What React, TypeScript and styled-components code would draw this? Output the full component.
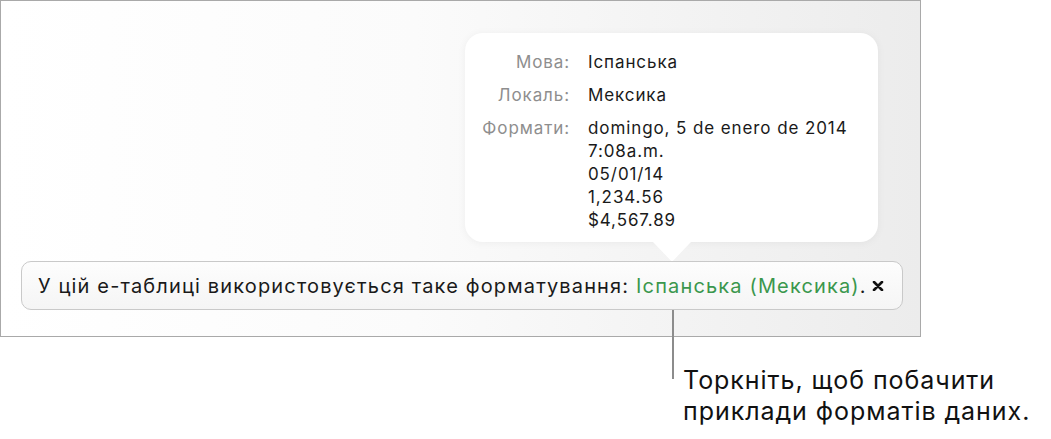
import React from "react";
import styled, { createGlobalStyle } from "styled-components";

const Global = createGlobalStyle`
  html, body { margin: 0; padding: 0; background: #ffffff; }
  body { font-family: Inter, "Liberation Sans", Arial, sans-serif; color: #1c1c1c; }
`;

const Page = styled.div`
  width: 1051px;
  height: 439px;
  overflow: hidden;
  display: flex;
  flex-direction: column;
`;

const Frame = styled.div`
  box-sizing: border-box;
  width: 921px;
  height: 337px;
  border: 1px solid #a9a9a9;
  background: linear-gradient(to right, #ffffff 0%, #fbfbfb 45%, #ececec 100%);
  display: flex;
  flex-direction: column;
  align-items: flex-start;
  padding: 32px 0 0 20px;
`;

const Popover = styled.div`
  position: relative;
  box-sizing: border-box;
  margin-left: 444px;
  width: 413px;
  height: 209px;
  background: #ffffff;
  border-radius: 18px;
  box-shadow: 0 1px 8px rgba(0, 0, 0, 0.05);
  padding: 18px 0 0 0;
`;

const Arrow = styled.div`
  position: absolute;
  left: 188px;
  bottom: -19px;
  width: 38px;
  height: 19px;
  background: #ffffff;
  clip-path: polygon(0 0, 100% 0, 52% 100%, 48% 100%);
`;

const InfoGrid = styled.div`
  display: grid;
  grid-template-columns: 105px auto;
  column-gap: 18px;
  row-gap: 10px;
  font-size: 17px;
  line-height: 23px;
  letter-spacing: 0.9px;
`;

const Label = styled.div`
  text-align: right;
  color: #8e8e8e;
  white-space: nowrap;
`;

const Value = styled.div`
  color: #1a1a1a;
  white-space: nowrap;
`;

const Notice = styled.div`
  box-sizing: border-box;
  margin-top: 19px;
  width: 882px;
  height: 49px;
  border: 1px solid #c9c9c9;
  border-radius: 10px;
  background: linear-gradient(to bottom, #fdfdfd, #f5f5f5);
  display: flex;
  align-items: center;
  justify-content: space-between;
  padding: 0 18px 0 16px;
  font-size: 20px;
  letter-spacing: 1.15px;
  color: #1a1a1a;
`;

const NoticeText = styled.span`
  white-space: nowrap;
`;

const Accent = styled.span`
  color: #3b974d;
`;

const Close = styled.span`
  display: flex;
  width: 12px;
  height: 10px;
`;

const Callout = styled.div`
  position: relative;
  margin-left: 672px;
  padding: 28px 0 0 11px;
`;

const Leader = styled.div`
  position: absolute;
  left: 0;
  top: -27px;
  width: 2px;
  height: 69px;
  background: #8c8c8c;
`;

const CalloutText = styled.div`
  font-size: 25px;
  line-height: 31px;
  letter-spacing: 0.95px;
  color: #111111;
  white-space: nowrap;
`;

export default function App() {
  return (
    <>
      <Global />
      <Page>
        <Frame>
          <Popover>
            <InfoGrid>
              <Label>Мова:</Label>
              <Value>Іспанська</Value>
              <Label>Локаль:</Label>
              <Value>Мексика</Value>
              <Label>Формати:</Label>
              <Value>
                domingo, 5 de enero de 2014
                <br />
                7:08a.m.
                <br />
                05/01/14
                <br />
                1,234.56
                <br />
                $4,567.89
              </Value>
            </InfoGrid>
            <Arrow />
          </Popover>
          <Notice>
            <NoticeText>
              У цій е-таблиці використовується таке форматування:{" "}
              <Accent>Іспанська (Мексика)</Accent>.
            </NoticeText>
            <Close>
              <svg width="12" height="10" viewBox="0 0 12 10">
                <path d="M2 1 L10 9 M10 1 L2 9" stroke="#111" strokeWidth="2.6" strokeLinecap="round" />
              </svg>
            </Close>
          </Notice>
        </Frame>
        <Callout>
          <Leader />
          <CalloutText>
            Торкніть, щоб побачити
            <br />
            приклади форматів даних.
          </CalloutText>
        </Callout>
      </Page>
    </>
  );
}
